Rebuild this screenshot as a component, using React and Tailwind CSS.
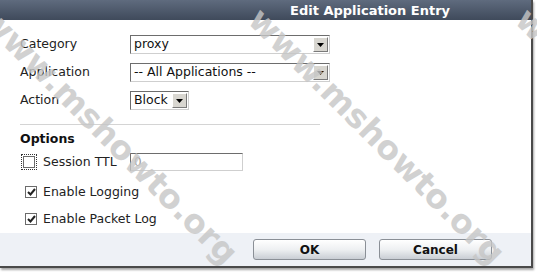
import React from "react";

const ui = { fontFamily: '"DejaVu Sans", Verdana, sans-serif' };

function Arrow() {
  return (
    <div className="w-[15px] h-[15px] bg-[#d8d6d0] border border-t-white border-l-white border-r-[#7a7a7a] border-b-[#7a7a7a] flex items-center justify-center">
      <svg width="7" height="4" viewBox="0 0 7 4">
        <path d="M0 0h7L3.5 4z" fill="#000" />
      </svg>
    </div>
  );
}

function Select({ value, w }) {
  return (
    <div
      className={`${w} h-[19px] flex items-center justify-between bg-white border border-t-[#6d6d6d] border-l-[#6d6d6d] border-r-[#cfcfcf] border-b-[#cfcfcf] pl-[3px] pr-[1px]`}
    >
      <span className="text-[12.5px] text-[#111] leading-none">{value}</span>
      <Arrow />
    </div>
  );
}

function Row({ label, children }) {
  return (
    <div className="flex items-center h-[19px]">
      <span className="w-[110px] text-[12.5px] text-[#222]">{label}</span>
      {children}
    </div>
  );
}

function Check({ checked, focus }) {
  return (
    <div
      className={`w-[16px] h-[16px] flex items-center justify-center ${
        focus ? "border border-dotted border-[#333]" : ""
      }`}
    >
      <div className="w-[12px] h-[12px] border border-[#6b6b6b] bg-white flex items-center justify-center">
        {checked && (
          <svg width="9" height="8" viewBox="0 0 9 8">
            <path d="M1 4l2.5 2.5L8 1" stroke="#222" strokeWidth="2" fill="none" />
          </svg>
        )}
      </div>
    </div>
  );
}

function Button({ children }) {
  return (
    <div className="w-[113px] h-[21px] rounded-[3px] border border-[#8a8f96] bg-gradient-to-b from-white via-[#eef0f2] to-[#c9ced4] flex items-center justify-center text-[12px] font-bold text-[#111]">
      {children}
    </div>
  );
}

// diagonal site watermark laid over the dialog
function Watermark({ x }) {
  return (
    <div className="absolute top-[136px] pointer-events-none" style={{ left: x }}>
      <span
        className="absolute -translate-x-1/2 -translate-y-1/2 rotate-[45deg] whitespace-nowrap text-[33px] leading-none font-bold text-[#c6c6c6] opacity-80"
        style={ui}
      >
        www.mshowto.org
      </span>
    </div>
  );
}

export default function App() {
  return (
    <div className="relative w-[537px] h-[272px] bg-white overflow-hidden" style={ui}>
      <div className="w-[533px] h-[268px] flex flex-col border-r-2 border-b-2 border-[#4a4a4a] shadow-[1px_2px_2px_rgba(0,0,0,0.35)]">
        <div className="h-[20px] bg-gradient-to-b from-[#5f6b7e] to-[#3f4a5b] flex items-center pl-[290px]">
          <span className="text-white font-bold text-[13px] leading-none">Edit Application Entry</span>
        </div>
        <div className="flex-1 bg-white pl-[20px] pt-[15px]">
          <div className="flex flex-col gap-[9px]">
            <Row label="Category">
              <Select value="proxy" w="w-[200px]" />
            </Row>
            <Row label="Application">
              <Select value="-- All Applications --" w="w-[200px]" />
            </Row>
            <Row label="Action">
              <Select value="Block" w="w-[59px]" />
            </Row>
          </div>
          <div className="w-[300px] h-px bg-[#d4d4d4] mt-[14px]" />
          <div className="text-[12.5px] font-bold text-[#111] mt-[6px] leading-[16px]">Options</div>
          <div className="flex items-center h-[18px] mt-[6px]">
            <div className="w-[23px] pl-[1px]">
              <Check focus />
            </div>
            <span className="w-[87px] text-[12.5px] text-[#222]">Session TTL</span>
            <div className="w-[113px] h-[18px] border border-t-[#6d6d6d] border-l-[#6d6d6d] border-r-[#cfcfcf] border-b-[#cfcfcf] pl-[3px] text-[12px] text-[#999] leading-[16px]">
              0
            </div>
          </div>
          <div className="flex items-center h-[16px] mt-[13px]">
            <div className="w-[23px] pl-[3px]">
              <Check checked />
            </div>
            <span className="text-[12.5px] text-[#222]">Enable Logging</span>
          </div>
          <div className="flex items-center h-[16px] mt-[11px]">
            <div className="w-[23px] pl-[3px]">
              <Check checked />
            </div>
            <span className="text-[12.5px] text-[#222]">Enable Packet Log</span>
          </div>
        </div>
        <div className="h-[33px] bg-[#eef1f6] flex items-center pl-[253px] gap-[13px]">
          <Button>OK</Button>
          <Button>Cancel</Button>
        </div>
      </div>
      <Watermark x={110} />
      <Watermark x={377} />
      <Watermark x={644} />
    </div>
  );
}
